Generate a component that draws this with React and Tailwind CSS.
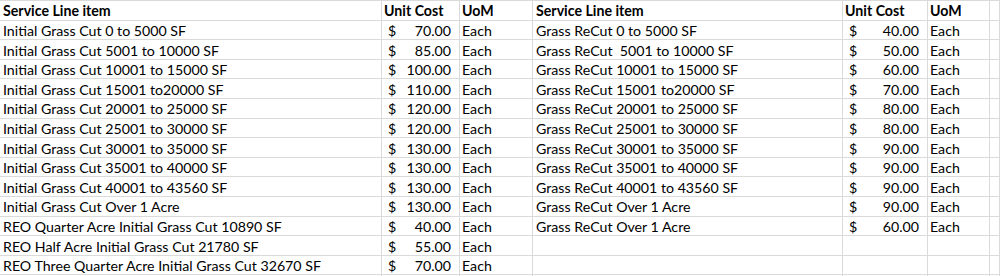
import React from 'react';

const leftRows = [
    ['Initial Grass Cut 0 to 5000 SF', '70.00'],
    ['Initial Grass Cut 5001 to 10000 SF', '85.00'],
    ['Initial Grass Cut 10001 to 15000 SF', '100.00'],
    ['Initial Grass Cut 15001 to20000 SF', '110.00'],
    ['Initial Grass Cut 20001 to 25000 SF', '120.00'],
    ['Initial Grass Cut 25001 to 30000 SF', '120.00'],
    ['Initial Grass Cut 30001 to 35000 SF', '130.00'],
    ['Initial Grass Cut 35001 to 40000 SF', '130.00'],
    ['Initial Grass Cut 40001 to 43560 SF', '130.00'],
    ['Initial Grass Cut Over 1 Acre', '130.00'],
    ['REO Quarter Acre Initial Grass Cut 10890 SF', '40.00'],
    ['REO Half Acre Initial Grass Cut 21780 SF', '55.00'],
    ['REO Three Quarter Acre Initial Grass Cut 32670 SF', '70.00'],
];

const rightRows = [
    ['Grass ReCut 0 to 5000 SF', '40.00'],
    ['Grass ReCut  5001 to 10000 SF', '50.00'],
    ['Grass ReCut 10001 to 15000 SF', '60.00'],
    ['Grass ReCut 15001 to20000 SF', '70.00'],
    ['Grass ReCut 20001 to 25000 SF', '80.00'],
    ['Grass ReCut 25001 to 30000 SF', '80.00'],
    ['Grass ReCut 30001 to 35000 SF', '90.00'],
    ['Grass ReCut 35001 to 40000 SF', '90.00'],
    ['Grass ReCut 40001 to 43560 SF', '90.00'],
    ['Grass ReCut Over 1 Acre', '90.00'],
    ['Grass ReCut Over 1 Acre', '60.00'],
];

const Cell = ({ children, className = '' }) => (
    <div className={`h-[19.6px] border-t border-r border-[#dadada] flex items-end pb-[1px] overflow-visible whitespace-pre ${className}`}>
        {children}
    </div>
);

const Cost = ({ value }) => (
    <Cell className="justify-between pl-[6px] pr-[8px]">
        {value && <span>$</span>}
        <span>{value}</span>
    </Cell>
);

const App = () => {
    const rows = [];
    for (let i = 0; i < 15; i++) {
        const l = leftRows[i];
        const r = rightRows[i];
        rows.push(
            <React.Fragment key={i}>
                <Cell className="pl-[3px]">{l ? l[0] : ''}</Cell>
                <Cost value={l ? l[1] : ''} />
                <Cell className="pl-[2px]">{l ? 'Each' : ''}</Cell>
                <Cell className="pl-[3px]">{r ? r[0] : ''}</Cell>
                <Cost value={r ? r[1] : ''} />
                <Cell className="pl-[2px]">{r ? 'Each' : ''}</Cell>
                <Cell />
            </React.Fragment>
        );
    }

    return (
        <div className="w-[1000px] h-[276px] overflow-hidden bg-white text-black text-[14.2px] leading-none" style={{ fontFamily: 'Lato, "Open Sans", sans-serif' }}>
            <div className="grid grid-cols-[382px_78px_73px_310px_85px_62px_1fr]">
                <Cell className="pl-[3px] font-bold">Service Line item</Cell>
                <Cell className="pl-[2px] font-bold">Unit Cost</Cell>
                <Cell className="pl-[2px] font-bold">UoM</Cell>
                <Cell className="pl-[3px] font-bold">Service Line item</Cell>
                <Cell className="pl-[2px] font-bold">Unit Cost</Cell>
                <Cell className="pl-[2px] font-bold">UoM</Cell>
                <Cell />
                {rows}
            </div>
        </div>
    );
};

export default App;
